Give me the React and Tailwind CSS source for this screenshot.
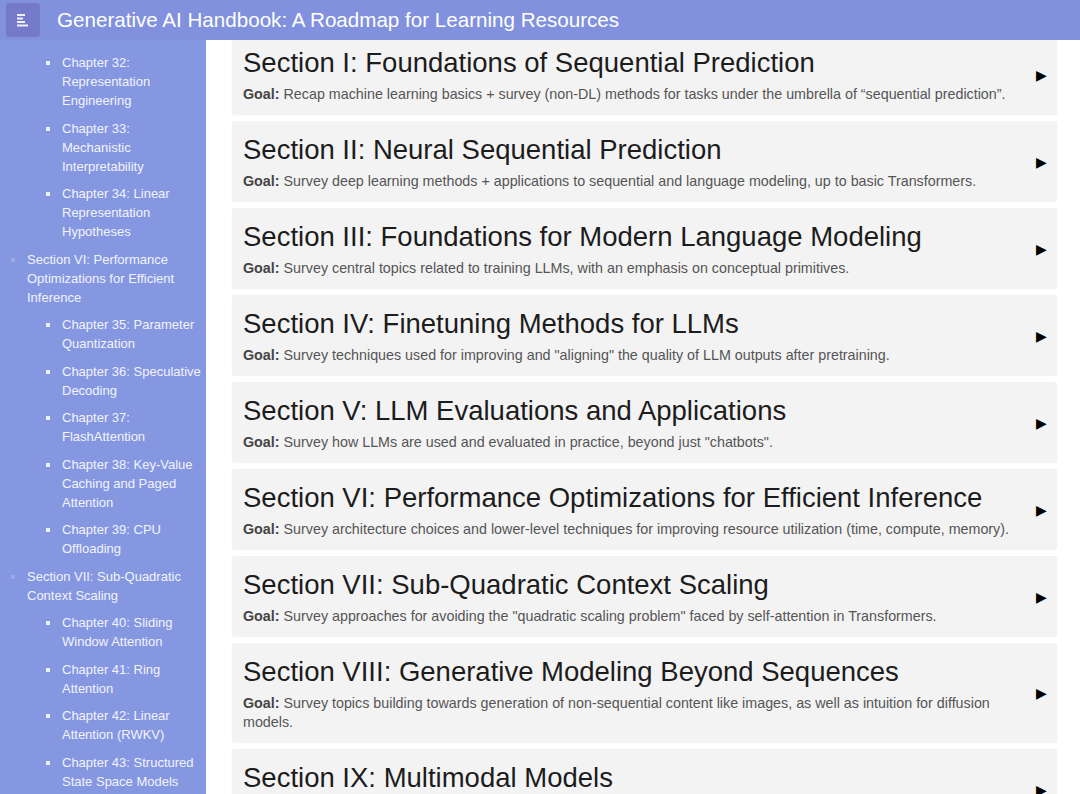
import React from "react";

const sidebar = [
  { type: "ch", lines: ["Chapter 32:", "Representation", "Engineering"] },
  { type: "ch", lines: ["Chapter 33:", "Mechanistic", "Interpretability"] },
  { type: "ch", lines: ["Chapter 34: Linear", "Representation", "Hypotheses"] },
  {
    type: "sec",
    title: ["Section VI: Performance", "Optimizations for Efficient", "Inference"],
    children: [
      ["Chapter 35: Parameter", "Quantization"],
      ["Chapter 36: Speculative", "Decoding"],
      ["Chapter 37:", "FlashAttention"],
      ["Chapter 38: Key-Value", "Caching and Paged", "Attention"],
      ["Chapter 39: CPU", "Offloading"],
    ],
  },
  {
    type: "sec",
    title: ["Section VII: Sub-Quadratic", "Context Scaling"],
    children: [
      ["Chapter 40: Sliding", "Window Attention"],
      ["Chapter 41: Ring", "Attention"],
      ["Chapter 42: Linear", "Attention (RWKV)"],
      ["Chapter 43: Structured", "State Space Models"],
      ["Chapter 44:", "HyperAttention"],
    ],
  },
];

const sections = [
  ["Section I: Foundations of Sequential Prediction", "Recap machine learning basics + survey (non-DL) methods for tasks under the umbrella of \u201csequential prediction\u201d."],
  ["Section II: Neural Sequential Prediction", "Survey deep learning methods + applications to sequential and language modeling, up to basic Transformers."],
  ["Section III: Foundations for Modern Language Modeling", "Survey central topics related to training LLMs, with an emphasis on conceptual primitives."],
  ["Section IV: Finetuning Methods for LLMs", "Survey techniques used for improving and \"aligning\" the quality of LLM outputs after pretraining."],
  ["Section V: LLM Evaluations and Applications", "Survey how LLMs are used and evaluated in practice, beyond just \"chatbots\"."],
  ["Section VI: Performance Optimizations for Efficient Inference", "Survey architecture choices and lower-level techniques for improving resource utilization (time, compute, memory)."],
  ["Section VII: Sub-Quadratic Context Scaling", "Survey approaches for avoiding the \"quadratic scaling problem\" faced by self-attention in Transformers."],
  ["Section VIII: Generative Modeling Beyond Sequences", "Survey topics building towards generation of non-sequential content like images, as well as intuition for diffusion models."],
  ["Section IX: Multimodal Models", "Survey how models can use multiple modalities of input and output (text, audio, images) simultaneously."],
];

function Lines({ lines }) {
  return lines.map((l, i) => (
    <span key={i} className="block whitespace-nowrap">
      {l}
    </span>
  ));
}

function ChapterItem({ lines }) {
  return (
    <li className="relative pl-[62px] mb-[8.5px]">
      <span className="absolute left-[46px] top-[8px] w-[4px] h-[4px] bg-[#eef0ff]" />
      <Lines lines={lines} />
    </li>
  );
}

export default function App() {
  return (
    <div
      className="w-[1080px] h-[794px] overflow-hidden flex flex-col bg-white"
      style={{ fontFamily: '"Liberation Sans", Arial, Helvetica, sans-serif' }}
    >
      <header className="h-[40px] shrink-0 bg-[#8191dd] flex items-center pl-[6px] relative z-10">
        <div className="w-[34px] h-[34px] rounded-[3px] bg-[#7479c9] flex items-center justify-center">
          <svg width="14" height="14" viewBox="0 0 14 14">
            <rect x="1" y="1" width="8" height="2" fill="#eef0ff" />
            <rect x="1" y="4.5" width="6" height="2" fill="#eef0ff" />
            <rect x="1" y="8" width="8" height="2" fill="#eef0ff" />
            <rect x="1" y="11.5" width="11" height="2" fill="#eef0ff" />
          </svg>
        </div>
        <h1 className="ml-[17px] text-[20.6px] text-white font-normal">
          Generative AI Handbook: A Roadmap for Learning Resources
        </h1>
      </header>
      <div className="flex flex-1 min-h-0">
        <aside className="w-[206px] shrink-0 bg-[#8597e0] overflow-hidden text-[13px] leading-[19px] text-[#f2f3ff] pt-[13px]">
          <ul>
            {sidebar.map((item, i) =>
              item.type === "ch" ? (
                <ChapterItem key={i} lines={item.lines} />
              ) : (
                <li key={i} className="mb-[8.5px]">
                  <div className="relative pl-[27px] mb-[8.5px]">
                    <span className="absolute left-[11px] top-[8px] w-[4px] h-[4px] bg-[#9aa8e6]" />
                    <Lines lines={item.title} />
                  </div>
                  <ul>
                    {item.children.map((c, j) => (
                      <ChapterItem key={j} lines={c} />
                    ))}
                  </ul>
                </li>
              )
            )}
          </ul>
        </aside>
        <main className="flex-1 min-w-0 overflow-hidden pl-[26px] pr-[23px]">
          <div className="-mt-[6px] flex flex-col gap-[7px]">
            {sections.map(([title, goal], i) => (
              <div
                key={i}
                className="bg-[#f3f3f4] rounded-[2px] shadow-[0_1px_2px_rgba(0,0,0,0.06)] flex items-center pl-[11px] pr-[10px] pt-[12px] pb-[10px]"
              >
                <div className="flex-1 min-w-0 pr-[22px]">
                  <div className="text-[27.5px] leading-[34px] text-[#1c1c1c]">{title}</div>
                  <div className="mt-[5px] text-[14.3px] leading-[19px] text-[#555]">
                    <b className="font-bold text-[#444]">Goal:</b> {goal}
                  </div>
                </div>
                <span className="text-[14px] text-black">&#9654;</span>
              </div>
            ))}
          </div>
        </main>
      </div>
    </div>
  );
}
